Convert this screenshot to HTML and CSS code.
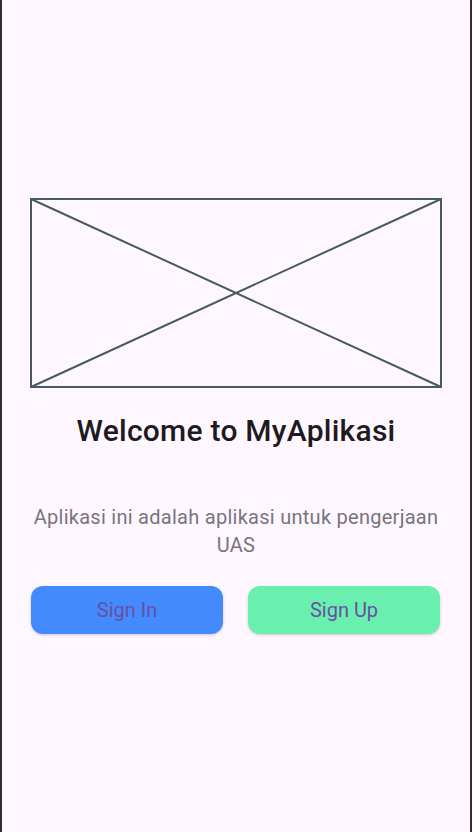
FILE: index.html
```html
<!DOCTYPE html>
<html>
<head>
<meta charset="utf-8">
<link rel="stylesheet" href="styles.css">
</head>
<body>
<div class="frame">
  <main class="content">
    <svg class="placeholder" viewBox="0 0 412 190" preserveAspectRatio="none">
      <rect x="1" y="1" width="410" height="188" fill="none" stroke="#455a64" stroke-width="2"/>
      <line x1="1" y1="1" x2="411" y2="189" stroke="#455a64" stroke-width="2"/>
      <line x1="1" y1="189" x2="411" y2="1" stroke="#455a64" stroke-width="2"/>
    </svg>
    <h1 class="title">Welcome to MyAplikasi</h1>
    <p class="subtitle">Aplikasi ini adalah aplikasi untuk pengerjaan UAS</p>
    <div class="actions">
      <button class="btn btn-signin">Sign In</button>
      <button class="btn btn-signup">Sign Up</button>
    </div>
  </main>
</div>
</body>
</html>
```
FILE: styles.css
```css
html, body {
  margin: 0;
  padding: 0;
  height: 100%;
}
body {
  font-family: Roboto, "Noto Sans", sans-serif;
  background: #fef7ff;
}
.frame {
  box-sizing: border-box;
  height: 832px;
  border-left: 2px solid #2f2f2f;
  border-right: 2px solid #2f2f2f;
  display: flex;
  align-items: center;
  justify-content: center;
}
.content {
  width: 412px;
  display: flex;
  flex-direction: column;
  align-items: center;
}
.placeholder {
  display: block;
  width: 412px;
  height: 190px;
}
.title {
  margin: 25px 0 0;
  font-size: 30px;
  font-weight: 500;
  letter-spacing: 0.25px;
  line-height: 36px;
  color: #1d1b20;
  text-align: center;
}
.subtitle {
  margin: 54px 0 0;
  font-size: 20px;
  line-height: 28px;
  letter-spacing: 0.27px;
  color: #79747e;
  text-align: center;
}
.actions {
  margin-top: 27px;
  width: 100%;
  display: flex;
  gap: 25px;
  padding: 0 2px 0 1px;
  box-sizing: border-box;
}
.btn {
  flex: 1;
  height: 48px;
  border: none;
  border-radius: 12px;
  font-family: Roboto, sans-serif;
  font-size: 20px;
  color: #6750a4;
  box-shadow: 0 1px 3px rgba(0,0,0,0.2);
}
.btn-signin { background: #448aff; }
.btn-signup { background: #69f0ae; }
```
